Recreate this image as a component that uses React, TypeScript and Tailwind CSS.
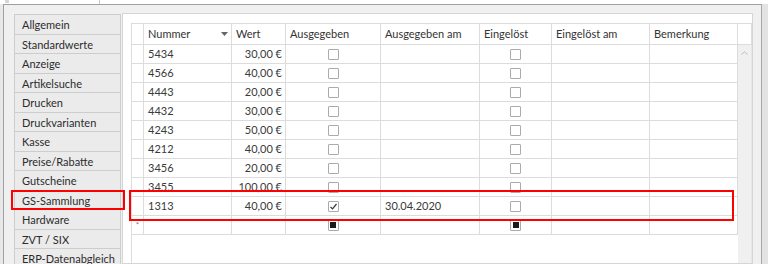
import React from 'react';

const navItems = [
  'Allgemein',
  'Standardwerte',
  'Anzeige',
  'Artikelsuche',
  'Drucken',
  'Druckvarianten',
  'Kasse',
  'Preise/Rabatte',
  'Gutscheine',
  'GS-Sammlung',
  'Hardware',
  'ZVT / SIX',
  'ERP-Datenabgleich',
];

interface Voucher {
  nummer: string;
  wert: string;
  ausgegeben: boolean;
  ausgegebenAm: string;
}

const rows: Voucher[] = [
  { nummer: '5434', wert: '30,00 €', ausgegeben: false, ausgegebenAm: '' },
  { nummer: '4566', wert: '40,00 €', ausgegeben: false, ausgegebenAm: '' },
  { nummer: '4443', wert: '20,00 €', ausgegeben: false, ausgegebenAm: '' },
  { nummer: '4432', wert: '30,00 €', ausgegeben: false, ausgegebenAm: '' },
  { nummer: '4243', wert: '50,00 €', ausgegeben: false, ausgegebenAm: '' },
  { nummer: '4212', wert: '40,00 €', ausgegeben: false, ausgegebenAm: '' },
  { nummer: '3456', wert: '20,00 €', ausgegeben: false, ausgegebenAm: '' },
  { nummer: '3455', wert: '100,00 €', ausgegeben: false, ausgegebenAm: '' },
  { nummer: '1313', wert: '40,00 €', ausgegeben: true, ausgegebenAm: '30.04.2020' },
];

type CheckState = 'off' | 'on' | 'mixed';

const CheckBox: React.FC<{ state: CheckState }> = ({ state }) => (
  <div className="w-[11px] h-[11px] border border-[#ababab] bg-white rounded-[1px] flex items-center justify-center">
    {state === 'on' && (
      <svg width="9" height="9" viewBox="0 0 9 9">
        <path d="M1.5 4.8 L3.5 6.8 L7.5 2" fill="none" stroke="#333" strokeWidth="1.2" />
      </svg>
    )}
    {state === 'mixed' && <div className="w-[6px] h-[6px] bg-[#1a1a1a]" />}
  </div>
);

// cell helpers
const cell = 'h-full border-r border-[#dcdcdc] flex items-center shrink-0';

const GridRow: React.FC<{ row?: Voucher; isNew?: boolean }> = ({ row, isNew }) => (
  <div className="flex h-[19px] border-b border-[#dcdcdc] text-[#3a3a3a]">
    <div className={`${cell} w-[12px] justify-center text-[8px] text-[#777]`}>{isNew ? '*' : ''}</div>
    <div className={`${cell} w-[88px] pl-[4px]`}>{row?.nummer}</div>
    <div className={`${cell} w-[54px] justify-end pr-[3px]`}>{row?.wert}</div>
    <div className={`${cell} w-[95px] justify-center`}>
      <CheckBox state={isNew ? 'mixed' : row?.ausgegeben ? 'on' : 'off'} />
    </div>
    <div className={`${cell} w-[99px] pl-[4px]`}>{row?.ausgegebenAm}</div>
    <div className={`${cell} w-[72px] justify-center`}>
      <CheckBox state={isNew ? 'mixed' : 'off'} />
    </div>
    <div className={`${cell} w-[98px]`} />
    <div className={`${cell} w-[88px]`} />
  </div>
);

export default function App() {
  return (
    <div
      className="relative w-[768px] h-[264px] overflow-hidden bg-[#e8e8e8] text-[11px]"
      style={{ fontFamily: 'Lato, "Noto Sans", sans-serif' }}
    >
      {/* top tab strip */}
      <div className="h-[4px] bg-white flex">
        <div className="w-[100px] border-r border-[#c8c8c8] pl-[5px]">
          <div className="w-[4px] h-[3px] bg-[#d6d6d6]" />
        </div>
      </div>

      <div className="flex h-[260px]">
        <div className="ml-[3px] flex flex-1 border-t border-l border-[#a0a0a0] bg-[#f0f0f0]">
          {/* navigation */}
          <div className="ml-[10px] mt-[9px] w-[107px] flex flex-col border-t border-[#cdcdcd]">
            {navItems.map((item) => (
              <div
                key={item}
                className="h-[19.5px] shrink-0 border-x border-b border-[#cdcdcd] bg-[#ebebeb] pl-[7px] pt-[2px] flex items-center text-[#2b2b2b] whitespace-nowrap"
              >
                {item}
              </div>
            ))}
          </div>

          {/* content panel */}
          <div className="ml-[1px] mt-[8px] w-[631px] bg-white border border-[#d5d5d5] pl-[8px] pt-[9px] flex">
            <div className="flex flex-col w-[621px] border-t border-l border-[#dcdcdc]">
              {/* header */}
              <div className="flex h-[21px] border-b border-[#dcdcdc] text-[#333]">
                <div className={`${cell} w-[12px]`} />
                <div className={`${cell} w-[88px] pl-[4px] justify-between pr-[3px]`}>
                  <span>Nummer</span>
                  <svg width="7" height="4" viewBox="0 0 7 4">
                    <path d="M0 0 H7 L3.5 4 Z" fill="#666" />
                  </svg>
                </div>
                <div className={`${cell} w-[54px] pl-[4px]`}>Wert</div>
                <div className={`${cell} w-[95px] pl-[4px]`}>Ausgegeben</div>
                <div className={`${cell} w-[99px] pl-[4px]`}>Ausgegeben am</div>
                <div className={`${cell} w-[72px] pl-[4px]`}>Eingelöst</div>
                <div className={`${cell} w-[98px] pl-[4px]`}>Eingelöst am</div>
                <div className={`${cell} w-[88px] pl-[4px]`}>Bemerkung</div>
                <div className={`${cell} w-[14px]`} />
              </div>

              {/* body */}
              <div className="flex flex-1">
                <div className="w-[606px]">
                  {rows.map((r) => (
                    <GridRow key={r.nummer} row={r} />
                  ))}
                  <GridRow isNew />
                </div>
                <div className="w-[14px] bg-[#f0f0f0] border-r border-[#e6e6e6] flex justify-center pt-[6px]">
                  <svg width="7" height="4" viewBox="0 0 7 4">
                    <path d="M0.5 3.5 L3.5 0.8 L6.5 3.5" fill="none" stroke="#bdbdbd" strokeWidth="1" />
                  </svg>
                </div>
              </div>
            </div>
          </div>
        </div>
        <div className="w-[7px] border-l border-[#a8a8a8] bg-[#e3e3e3]" />
      </div>

      {/* red highlight marks */}
      <div className="absolute left-[11px] top-[190px] w-[114px] h-[20px] border-2 border-[#f00]" />
      <div className="absolute left-[129px] top-[190px] w-[605px] h-[31px] border-2 border-[#f00]" />
    </div>
  );
}
